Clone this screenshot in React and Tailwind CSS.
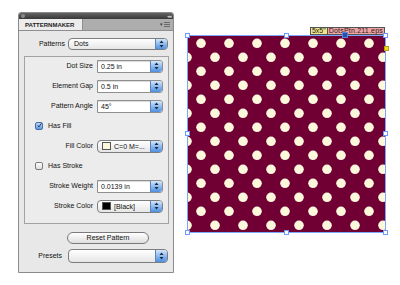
import React from 'react';

const Stepper = ({ h = 'h-full' }) => (
  <div className={`w-[12px] ${h} shrink-0 rounded-r-[3px] border-l border-[#5d83b8] bg-linear-to-b from-[#d4e6fb] via-[#8dbaf0] to-[#4d8fe0] flex items-center justify-center`}>
    <svg width="5" height="8" viewBox="0 0 5 8">
      <path d="M2.5 0.5 L4.5 3 L0.5 3 Z" fill="#1b2a40" />
      <path d="M2.5 7.5 L4.5 5 L0.5 5 Z" fill="#1b2a40" />
    </svg>
  </div>
);

const Field = ({ value }) => (
  <div className="w-[66px] h-[13px] flex border border-[#8f8f8f] bg-white rounded-r-[3px] shadow-[inset_0_1px_1px_rgba(0,0,0,0.15)]">
    <span className="flex-1 pl-[3px] leading-[11px] text-[#111]">{value}</span>
    <Stepper />
  </div>
);

const ColorPopup = ({ swatch, value }) => (
  <div className="w-[66px] h-[13px] flex border border-[#7d7d7d] rounded-[4px] bg-linear-to-b from-white to-[#e6e6e6]">
    <div className="flex-1 flex items-center pl-[4px] gap-[3px]">
      <span className={`w-[9px] h-[8px] border border-[#555] ${swatch}`} />
      <span className="leading-[11px] text-[#111]">{value}</span>
    </div>
    <Stepper />
  </div>
);

const Row = ({ label, children }) => (
  <div className="flex items-center h-[12px]">
    <span className="w-[68px] text-right text-[#111]">{label}</span>
    <div className="ml-[4px]">{children}</div>
  </div>
);

const Check = ({ checked, label }) => (
  <div className="flex items-center h-[12px] pl-[10px]">
    {checked ? (
      <span className="w-[8px] h-[8px] rounded-[2px] border border-[#4a6fa8] bg-linear-to-b from-[#bcd6f7] to-[#5a98e6] flex items-center justify-center">
        <svg width="9" height="9" viewBox="0 0 9 9" className="-mt-[2px] ml-[1px]">
          <path d="M1.5 4.5 L3.5 7 L8 0.5" stroke="#10233f" strokeWidth="1.6" fill="none" />
        </svg>
      </span>
    ) : (
      <span className="w-[8px] h-[8px] rounded-[2px] border border-[#7c7c7c] bg-linear-to-b from-white to-[#dcdcdc]" />
    )}
    <span className="ml-[5px] text-[#111]">{label}</span>
  </div>
);

const Handle = ({ className }) => (
  <span className={`absolute w-[5px] h-[5px] bg-white border border-[#6a9cff] ${className}`} />
);

export default function App() {
  return (
    <div className="w-[400px] h-[285px] bg-white flex items-start pl-[18px] pt-[12px] font-['Liberation_Sans',Arial,sans-serif] text-[7px]">
      {/* panel */}
      <div className="w-[156px] h-[261px] flex flex-col border border-[#8a8a8a] rounded-t-[3px] bg-[#e8e8e8] overflow-hidden">
        <div className="h-[6px] bg-linear-to-b from-[#636363] to-[#383838] flex items-center justify-between px-[2px]">
          <span className="w-[4px] h-[4px] rounded-full bg-[#8a8a8a]" />
          <span className="text-[#cfcfcf] text-[5px] leading-[6px] tracking-[-1px]">◂◂</span>
        </div>
        <div className="h-[12px] bg-[#adadad] flex items-stretch border-b border-[#8e8e8e]">
          <div className="w-[64px] bg-[#ececec] border-r border-[#8e8e8e] pl-[6px] font-bold text-[6px] leading-[12px] text-[#1e1e1e] whitespace-nowrap overflow-hidden">PATTERNMAKER</div>
          <div className="flex-1" />
          <div className="flex items-center gap-[1px] pr-[3px]">
            <span className="text-[5px] text-[#3a3a3a]">▾</span>
            <span className="flex flex-col gap-[1px]">
              <span className="w-[6px] h-[1px] bg-[#6a6a6a]" />
              <span className="w-[6px] h-[1px] bg-[#6a6a6a]" />
              <span className="w-[6px] h-[1px] bg-[#6a6a6a]" />
            </span>
          </div>
        </div>

        <div className="flex items-center h-[12px] mt-[7px]">
          <span className="w-[46px] text-right text-[#111]">Patterns</span>
          <div className="ml-[3px] w-[100px] h-[12px] flex border border-[#7d7d7d] rounded-[4px] bg-linear-to-b from-white to-[#e6e6e6]">
            <span className="flex-1 pl-[5px] leading-[10px] text-[#111]">Dots</span>
            <Stepper />
          </div>
        </div>

        <div className="mt-[6px] ml-[5px] w-[145px] h-[168px] border border-[#a2a2a2] bg-[#ececec] pt-[3px] flex flex-col gap-[8px]">
          <Row label="Dot Size"><Field value="0.25 in" /></Row>
          <Row label="Element Gap"><Field value="0.5 in" /></Row>
          <Row label="Pattern Angle"><Field value="45°" /></Row>
          <Check checked label="Has Fill" />
          <Row label="Fill Color"><ColorPopup swatch="bg-[#fdf7dc]" value="C=0 M=..." /></Row>
          <Check label="Has Stroke" />
          <Row label="Stroke Weight"><Field value="0.0139 in" /></Row>
          <Row label="Stroke Color"><ColorPopup swatch="bg-black" value="[Black]" /></Row>
        </div>

        <div className="mt-[8px] ml-[48px] w-[82px] h-[12px] rounded-full border border-[#7a7a7a] bg-linear-to-b from-white to-[#dedede] flex items-center justify-center text-[#111]">
          Reset Pattern
        </div>

        <div className="flex items-center h-[14px] mt-[5px]">
          <span className="w-[43px] text-right text-[#111]">Presets</span>
          <div className="ml-[6px] w-[100px] h-[14px] flex border border-[#7d7d7d] rounded-[4px] bg-linear-to-b from-white to-[#e6e6e6]">
            <span className="flex-1" />
            <Stepper />
          </div>
        </div>
      </div>

      {/* canvas */}
      <div className="ml-[13px] mt-[15px] flex flex-col">
        <div className="h-[8px] w-[199px] flex justify-end pr-[1px] text-[7px] leading-[6px] text-[#222] whitespace-nowrap">
          <span className="px-[1px] bg-[#efe78a] border border-[#555] text-center">5x5"</span>
          <span className="px-[1px] bg-[#f2a3a3] border border-[#555] border-l-0 text-center tracking-[0.2px]">DotsPtn.211.eps</span>
        </div>
        <div className="relative w-[199px] h-[198px]">
          <svg width="199" height="198" className="block">
            <defs>
              <pattern id="dots" x="0" y="0" width="28" height="28" patternUnits="userSpaceOnUse">
                <rect width="28" height="28" fill="#700034" />
                <circle cx="14" cy="8.3" r="4.8" fill="#fdf7dc" />
                <circle cx="0" cy="22.3" r="4.8" fill="#fdf7dc" />
                <circle cx="28" cy="22.3" r="4.8" fill="#fdf7dc" />
              </pattern>
            </defs>
            <rect width="199" height="198" fill="url(#dots)" />
          </svg>
          <div className="absolute inset-0 border border-[#7da7ff]" />
          <Handle className="-left-[2px] -top-[2px]" />
          <Handle className="left-[97px] -top-[2px]" />
          <Handle className="-right-[2px] -top-[2px]" />
          <Handle className="-left-[2px] top-[96px]" />
          <Handle className="-right-[2px] top-[96px]" />
          <Handle className="-left-[2px] -bottom-[2px]" />
          <Handle className="left-[97px] -bottom-[2px]" />
          <Handle className="-right-[2px] -bottom-[2px]" />
          <span className="absolute left-[155px] -top-[3px] w-[6px] h-[6px] bg-[#2c4fa8] border border-[#5b82d8]" />
          <span className="absolute -right-[3px] top-[11px] w-[5px] h-[5px] bg-[#f4dc1a] border border-[#b8a010]" />
        </div>
      </div>
    </div>
  );
}
